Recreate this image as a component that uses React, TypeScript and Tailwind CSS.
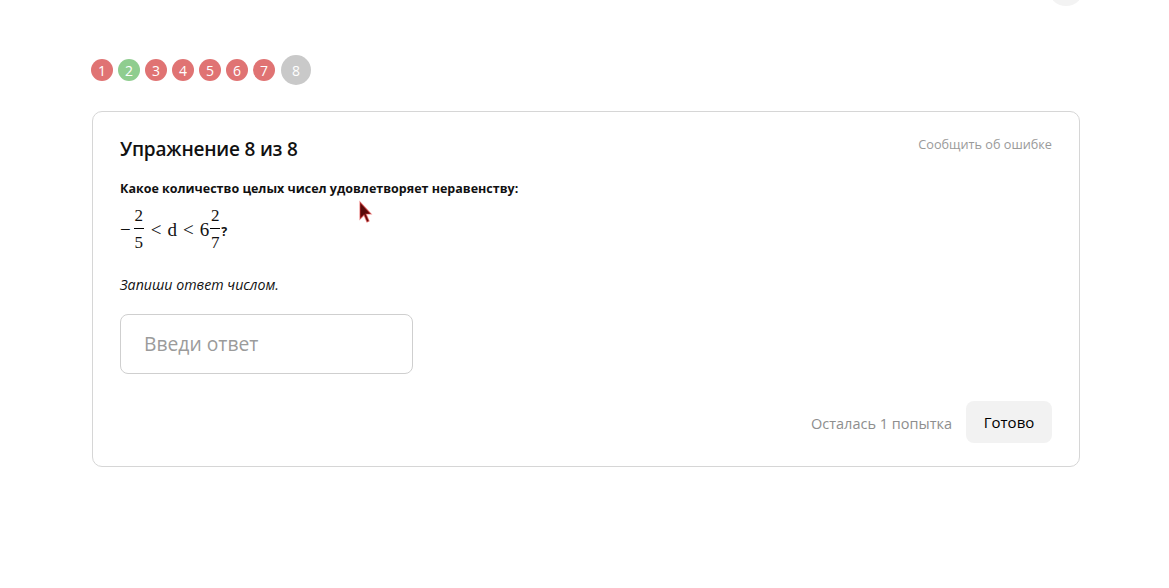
import React from 'react';

const steps = [
  { n: 1, c: 'bg-[#e07373]' },
  { n: 2, c: 'bg-[#8fcd8f]' },
  { n: 3, c: 'bg-[#e07373]' },
  { n: 4, c: 'bg-[#e07373]' },
  { n: 5, c: 'bg-[#e07373]' },
  { n: 6, c: 'bg-[#e07373]' },
  { n: 7, c: 'bg-[#e07373]' },
];

function Frac({ a, b }: { a: string; b: string }) {
  return (
    <span className="inline-flex flex-col items-center mx-[1px] leading-none">
      <span className="text-[17px] pb-[4px]">{a}</span>
      <span className="w-[10px] h-[1px] bg-black" />
      <span className="text-[17px] pt-[5px]">{b}</span>
    </span>
  );
}

export default function App() {
  return (
    <div className="relative w-[1169px] h-[588px] bg-white overflow-hidden font-['Open_Sans',sans-serif] text-[#111]">
      <div className="absolute left-[1048px] top-[-30px] w-[36px] h-[36px] rounded-full bg-[#f3f3f3]" />

      <div className="pl-[91px] pt-[55px] flex items-center gap-[5px]">
        {steps.map((s) => (
          <div key={s.n} className={`w-[22px] h-[22px] rounded-full ${s.c} text-white text-[14px] flex items-center justify-center`}>
            {s.n}
          </div>
        ))}
        <div className="w-[30px] h-[30px] ml-[1px] rounded-full bg-[#c9c9c9] text-white text-[14px] flex items-center justify-center">8</div>
      </div>

      <div className="ml-[92px] mt-[26px] w-[988px] h-[356px] border border-[#d6d6d6] rounded-[10px] px-[27px] pt-[24px] flex flex-col">
        <div className="flex items-start justify-between">
          <div className="text-[19px] font-semibold leading-[26px] tracking-[-0.2px]">Упражнение 8 из 8</div>
          <div className="text-[12.7px] text-[#9a9a9a] mt-[-1px]">Сообщить об ошибке</div>
        </div>

        <div className="mt-[18px] text-[12.5px] font-bold leading-[18px]">Какое количество целых чисел удовлетворяет неравенству:</div>

        <div className="mt-[9px] flex items-center font-['Liberation_Serif',serif] text-[19px] leading-none">
          <span className="mr-[2px]">−</span>
          <Frac a="2" b="5" />
          <span className="mx-[6px]">&lt;</span>
          <span>d</span>
          <span className="mx-[6px]">&lt;</span>
          <span>6</span>
          <Frac a="2" b="7" />
          <span className="font-['Open_Sans',sans-serif] font-bold text-[12.5px] mt-[6px]">?</span>
        </div>

        <div className="mt-[24px] text-[14.2px] italic leading-[20px]">Запиши ответ числом.</div>

        <div className="mt-[19px] w-[293px] h-[60px] border border-[#cfcfcf] rounded-[8px] flex items-center pl-[23px] text-[19.3px] text-[#9b9b9b]">
          Введи ответ
        </div>

        <div className="mt-[27px] flex items-center justify-end gap-[14px]">
          <span className="text-[14.5px] text-[#8e8e8e] mt-[4px]">Осталась 1 попытка</span>
          <button className="w-[86px] h-[42px] rounded-[8px] bg-[#f2f2f2] text-[15px] text-black">Готово</button>
        </div>
      </div>

      <svg className="absolute left-[356px] top-[199px]" width="18" height="26" viewBox="0 0 18 26">
        <path d="M4 3 L4 20 L8 16 L11 23 L13 22 L10 15 L15 15 Z" fill="#5a0a0a" stroke="#e04040" strokeWidth="1.2" strokeOpacity="0.6" />
      </svg>
    </div>
  );
}
